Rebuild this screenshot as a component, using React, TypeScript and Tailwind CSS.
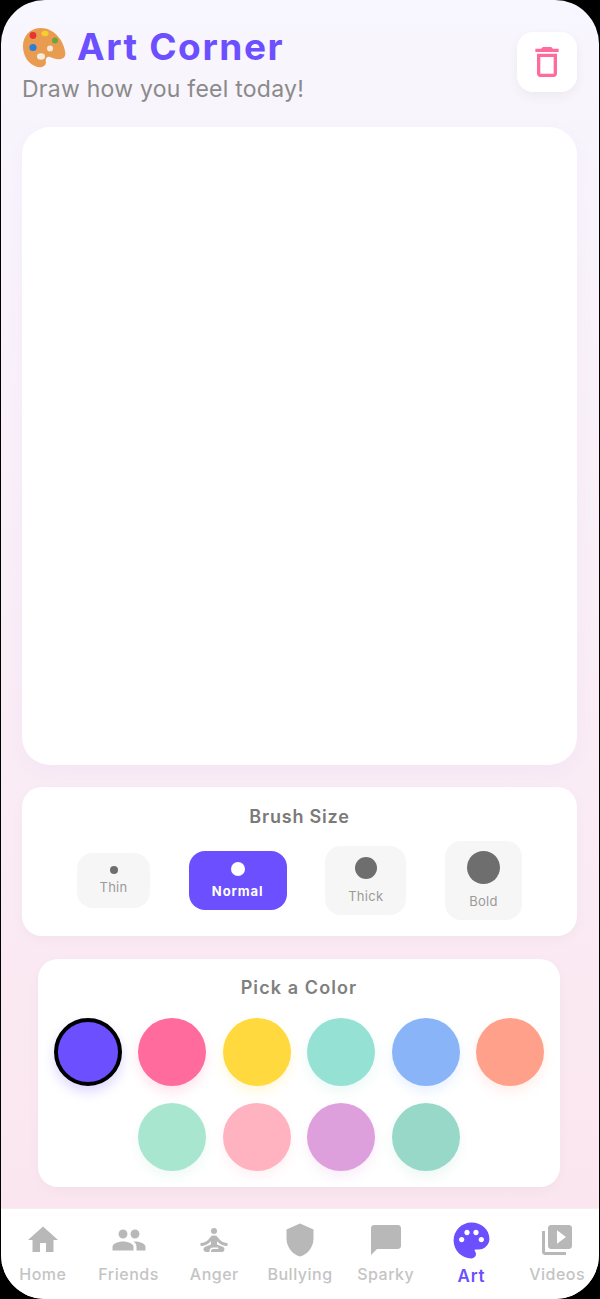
import React from "react";
import {
  MdHome,
  MdPeople,
  MdSelfImprovement,
  MdShield,
  MdChatBubble,
  MdPalette,
  MdVideoLibrary,
  MdDeleteOutline,
} from "react-icons/md";

const brushSizes = [
  { label: "Thin", dot: "w-2 h-2", box: "w-[73px] h-[55px]", gap: "gap-[5px]" },
  { label: "Normal", dot: "w-3.5 h-3.5", box: "w-[98px] h-[59px]", gap: "gap-[7px]", active: true },
  { label: "Thick", dot: "w-[22px] h-[22px]", box: "w-[81px] h-[69px]", gap: "gap-[9px]" },
  { label: "Bold", dot: "w-[33px] h-[33px]", box: "w-[77px] h-[79px]", gap: "gap-[9px]" },
];

const colors = [
  { bg: "bg-[#6c4fff]", shadow: "shadow-[0_6px_12px_rgba(108,79,255,0.22)]", selected: true },
  { bg: "bg-[#ff6b9d]", shadow: "shadow-[0_6px_12px_rgba(255,107,157,0.18)]" },
  { bg: "bg-[#ffd93d]", shadow: "shadow-[0_6px_12px_rgba(255,217,61,0.18)]" },
  { bg: "bg-[#95e1d3]", shadow: "shadow-[0_6px_12px_rgba(149,225,211,0.18)]" },
  { bg: "bg-[#8ab4f8]", shadow: "shadow-[0_6px_12px_rgba(138,180,248,0.18)]" },
  { bg: "bg-[#ffa08a]", shadow: "shadow-[0_6px_12px_rgba(255,160,138,0.18)]" },
  { bg: "bg-[#a8e6cf]", shadow: "shadow-[0_6px_12px_rgba(168,230,207,0.18)]" },
  { bg: "bg-[#ffb3c1]", shadow: "shadow-[0_6px_12px_rgba(255,179,193,0.18)]" },
  { bg: "bg-[#dda0dd]", shadow: "shadow-[0_6px_12px_rgba(221,160,221,0.18)]" },
  { bg: "bg-[#98d8c8]", shadow: "shadow-[0_6px_12px_rgba(152,216,200,0.18)]" },
];

const navItems = [
  { label: "Home", icon: MdHome },
  { label: "Friends", icon: MdPeople },
  { label: "Anger", icon: MdSelfImprovement },
  { label: "Bullying", icon: MdShield },
  { label: "Sparky", icon: MdChatBubble },
  { label: "Art", icon: MdPalette, active: true },
  { label: "Videos", icon: MdVideoLibrary },
];

function PaletteEmoji() {
  return (
    <svg width="44" height="41" viewBox="0 0 44 41" className="shrink-0">
      <path
        d="M19 1C8 1 1 9 1 19c0 6 2 12 6 16 4 4 9 6 13 5 3-1 4-3 4-5-1-3 1-6 4-5 3 1 7 3 11 2 4-1 5-4 4-8C41 12 31 1 19 1z"
        fill="#e99c50"
      />
      <circle cx="11" cy="8.5" r="3.4" fill="#e5352f" />
      <ellipse cx="23" cy="6.5" rx="3.6" ry="2.8" fill="#f5cf2b" />
      <ellipse cx="33" cy="13.5" rx="3" ry="3" fill="#6da53a" />
      <circle cx="11" cy="20.5" r="3.6" fill="#2b7fd6" />
      <ellipse cx="19" cy="29.5" rx="4" ry="3.2" fill="#f3ede4" />
      <circle cx="28" cy="21.5" r="3" fill="#f7ead8" />
    </svg>
  );
}

export default function App() {
  return (
    <div className="w-[600px] h-[1299px] bg-black font-['Inter',sans-serif]">
      <div className="mx-px h-full rounded-[44px] overflow-hidden flex flex-col bg-gradient-to-b from-[#f8f6fe] to-[#fbe5ee]">
        {/* Header */}
        <div className="flex justify-between pl-[21px] pr-[22px] pt-[27px] h-[127px] shrink-0">
          <div>
            <div className="flex items-center gap-[11px] h-10">
              <PaletteEmoji />
              <h1 className="text-[37px] leading-10 font-bold tracking-[1.6px] text-[#6c4fff]">Art Corner</h1>
            </div>
            <p className="mt-1.5 text-[23px] leading-8 tracking-[0.25px] text-[#8a8a8a]">Draw how you feel today!</p>
          </div>
          <button className="mt-[5px] w-[60px] h-[60px] rounded-2xl bg-white flex items-center justify-center shadow-[0_4px_12px_rgba(0,0,0,0.05)]">
            <MdDeleteOutline size={40} className="text-[#ff6b9d]" />
          </button>
        </div>

        {/* Canvas */}
        <div className="ml-[21px] mr-[22px] h-[638px] shrink-0 rounded-[28px] bg-white shadow-[0_6px_20px_rgba(108,79,255,0.04)]" />

        {/* Brush size */}
        <div className="ml-[21px] mr-[22px] mt-[22px] h-[149px] shrink-0 rounded-[20px] bg-white pt-[18px] shadow-[0_4px_14px_rgba(0,0,0,0.03)]">
          <h2 className="text-center text-[18px] leading-6 font-semibold tracking-[0.8px] text-[#7a7a7a]">Brush Size</h2>
          <div className="h-[80px] mt-[11px] px-[55px] flex items-center justify-between">
            {brushSizes.map((b) => (
              <button
                key={b.label}
                className={`${b.box} ${b.gap} rounded-2xl flex flex-col items-center justify-center ${
                  b.active ? "bg-[#6c4fff]" : "bg-[#f6f6f6]"
                }`}
              >
                <span className={`${b.dot} rounded-full ${b.active ? "bg-white" : "bg-[#6e6e6e]"}`} />
                <span
                  className={`text-[13px] leading-4 ${
                    b.active ? "text-white font-bold tracking-[0.9px]" : "text-[#9a9a9a] tracking-[0.3px]"
                  }`}
                >
                  {b.label}
                </span>
              </button>
            ))}
          </div>
        </div>

        {/* Colors */}
        <div className="ml-[37px] mr-[39px] mt-[23px] h-[228px] shrink-0 rounded-[20px] bg-white pt-[17px] shadow-[0_4px_14px_rgba(0,0,0,0.03)]">
          <h2 className="text-center text-[18px] leading-6 font-semibold tracking-[1.1px] text-[#7f7f7f]">Pick a Color</h2>
          <div className="mt-[18px] px-[15px] flex flex-wrap justify-center gap-x-[16.5px] gap-y-[17px]">
            {colors.map((c) => (
              <span
                key={c.bg}
                className={`w-[68px] h-[68px] rounded-full ${c.bg} ${c.shadow} ${
                  c.selected ? "border-4 border-black" : ""
                }`}
              />
            ))}
          </div>
        </div>

        {/* Bottom nav */}
        <nav className="mt-auto h-[91px] -mx-px shrink-0 bg-white flex border-t border-[#f4eef2]">
          {navItems.map(({ label, icon: Icon, active }) => (
            <div key={label} className="flex-1 flex flex-col items-center pt-[9px]">
              <div className="h-[44px] flex items-center justify-center">
                <Icon size={active ? 43 : 36} className={active ? "text-[#6c4fff]" : "text-[#b8b8b8]"} />
              </div>
              <span
                className={`leading-6 ${
                  active
                    ? "mt-[2px] text-[17px] font-semibold tracking-[0.8px] text-[#6c4fff]"
                    : "text-[16px] font-medium tracking-[0.5px] text-[#c4c4c4]"
                }`}
              >
                {label}
              </span>
            </div>
          ))}
        </nav>
      </div>
    </div>
  );
}
